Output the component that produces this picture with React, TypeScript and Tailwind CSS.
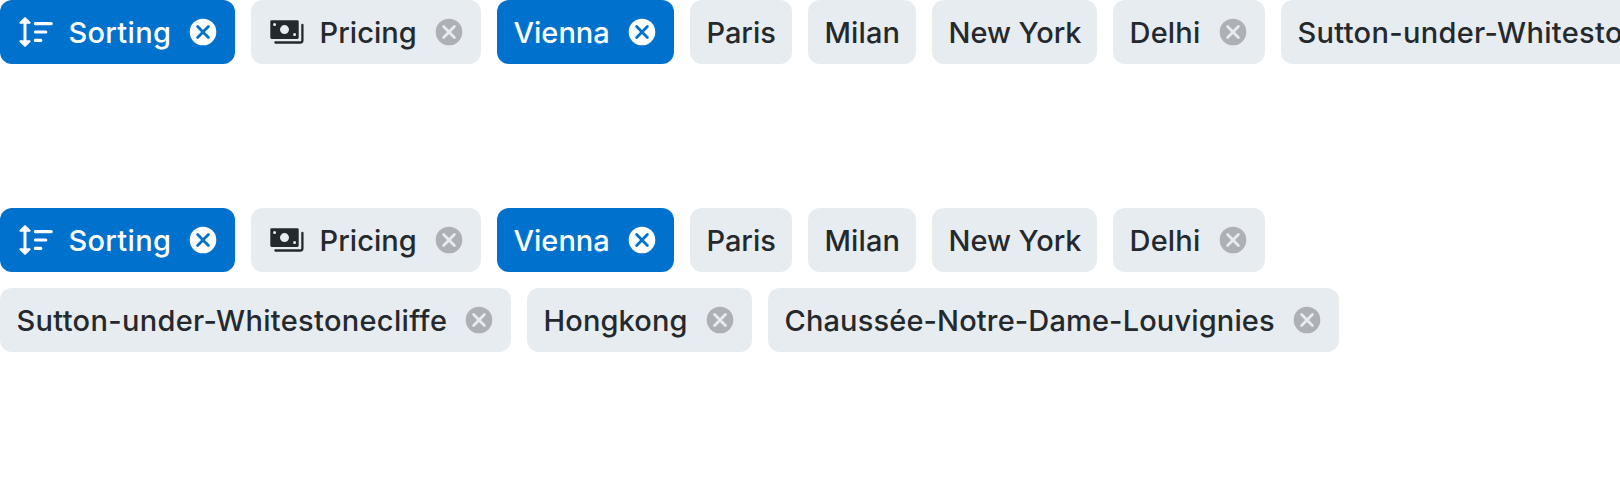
import React from "react";

type IconName = "sort" | "money";

interface ChipData {
  label: string;
  textClass: string;
  icon?: IconName;
  selected?: boolean;
  removable?: boolean;
}

const sorting: ChipData = { label: "Sorting", textClass: "w-[103px] tracking-[0.3px]", icon: "sort", selected: true, removable: true };
const pricing: ChipData = { label: "Pricing", textClass: "w-[98px] tracking-[0.05px]", icon: "money", removable: true };
const vienna: ChipData = { label: "Vienna", textClass: "w-[97px] tracking-[0px]", selected: true, removable: true };
const paris: ChipData = { label: "Paris", textClass: "w-[70px] tracking-[-0.05px]" };
const milan: ChipData = { label: "Milan", textClass: "w-[76px] tracking-[0.1px]" };
const newYork: ChipData = { label: "New York", textClass: "w-[133px] tracking-[-0.05px]" };
const delhi: ChipData = { label: "Delhi", textClass: "w-[72px] tracking-[0.2px]", removable: true };
const sutton: ChipData = { label: "Sutton-under-Whitestonecliffe", textClass: "w-[431px] tracking-[0.32px]", removable: true };
const hongkong: ChipData = { label: "Hongkong", textClass: "w-[145px] tracking-[0.15px]", removable: true };
const chaussee: ChipData = { label: "Chaussée-Notre-Dame-Louvignies", textClass: "w-[491px] tracking-[0.14px]", removable: true };

const chips = [sorting, pricing, vienna, paris, milan, newYork, delhi, sutton, hongkong, chaussee];

function SortIcon() {
  return (
    <svg viewBox="0 0 40 40" className="size-10 shrink-0" fill="none" stroke="currentColor" strokeWidth="3.2" strokeLinecap="round" strokeLinejoin="round">
      <path d="M9 9v22" strokeLinecap="butt" strokeWidth="3" />
      <path d="M9 6.3 13.5 10.7h-9zM9 33.7 4.500 29.300h9z" fill="currentColor" strokeWidth="2.2" />
      <path d="M19.400 11.600h15.800M19.400 20h10.400M19.400 28.400h5.400" />
    </svg>
  );
}

function MoneyIcon() {
  return (
    <svg viewBox="0 0 40 40" className="size-10 shrink-0" fill="none">
      <path
        fill="currentColor"
        fillRule="evenodd"
        d="M4.600 8.200h25.800A1.300 1.300 0 0 1 31.700 9.500v16.100a1.300 1.300 0 0 1-1.300 1.300H4.600a1.300 1.300 0 0 1-1.300-1.300V9.500A1.300 1.300 0 0 1 4.600 8.200ZM17.500 13.100a4.500 4.500 0 1 0 0 9 4.500 4.500 0 0 0 0-9ZM7.600 11a1.500 1.500 0 1 0 0 3 1.500 1.500 0 0 0 0-3Zm20 10.100a1.500 1.500 0 1 0 0 3 1.500 1.500 0 0 0 0-3Z"
      />
      <path d="M8.400 30.500H33.400a2 2 0 0 0 2-2V13" stroke="currentColor" strokeWidth="2.300" strokeLinecap="round" />
    </svg>
  );
}

function RemoveIcon({ selected }: { selected?: boolean }) {
  return (
    <svg viewBox="0 0 40 40" className="size-10 shrink-0" fill="none">
      <circle cx="20" cy="20" r="13.3" className={selected ? "fill-white" : "fill-[#adb0b5]"} />
      <path
        d="m14.600 14.600 10.800 10.800m0-10.800-10.800 10.800"
        className={selected ? "stroke-[#0072ce]" : "stroke-[#e7ecf0]"}
        strokeWidth="2.8"
        strokeLinecap="round"
      />
    </svg>
  );
}

function Chip({ label, textClass, icon, selected, removable }: ChipData) {
  return (
    <button
      type="button"
      className={`flex h-16 shrink-0 items-center gap-3 rounded-xl pl-4 ${removable ? "pr-3" : "pr-4"} ${selected ? "bg-[#0072ce] text-white" : "bg-[#e7ecf0] text-[#24292d]"}`}
    >
      {icon === "sort" && <SortIcon />}
      {icon === "money" && <MoneyIcon />}
      <span className={`pt-0.5 pl-[0.5px] text-left text-[29px] leading-10 font-medium whitespace-nowrap ${textClass}`}>{label}</span>
      {removable && <RemoveIcon selected={selected} />}
    </button>
  );
}

export default function App() {
  return (
    <main className="flex h-[480px] w-full flex-col gap-36 overflow-hidden bg-white font-['Inter',sans-serif]">
      <div className="flex gap-4 overflow-hidden">
        {chips.map((chip) => (
          <Chip key={chip.label} {...chip} />
        ))}
      </div>
      <div className="flex flex-wrap gap-4">
        {chips.map((chip) => (
          <Chip key={chip.label} {...chip} />
        ))}
      </div>
    </main>
  );
}
